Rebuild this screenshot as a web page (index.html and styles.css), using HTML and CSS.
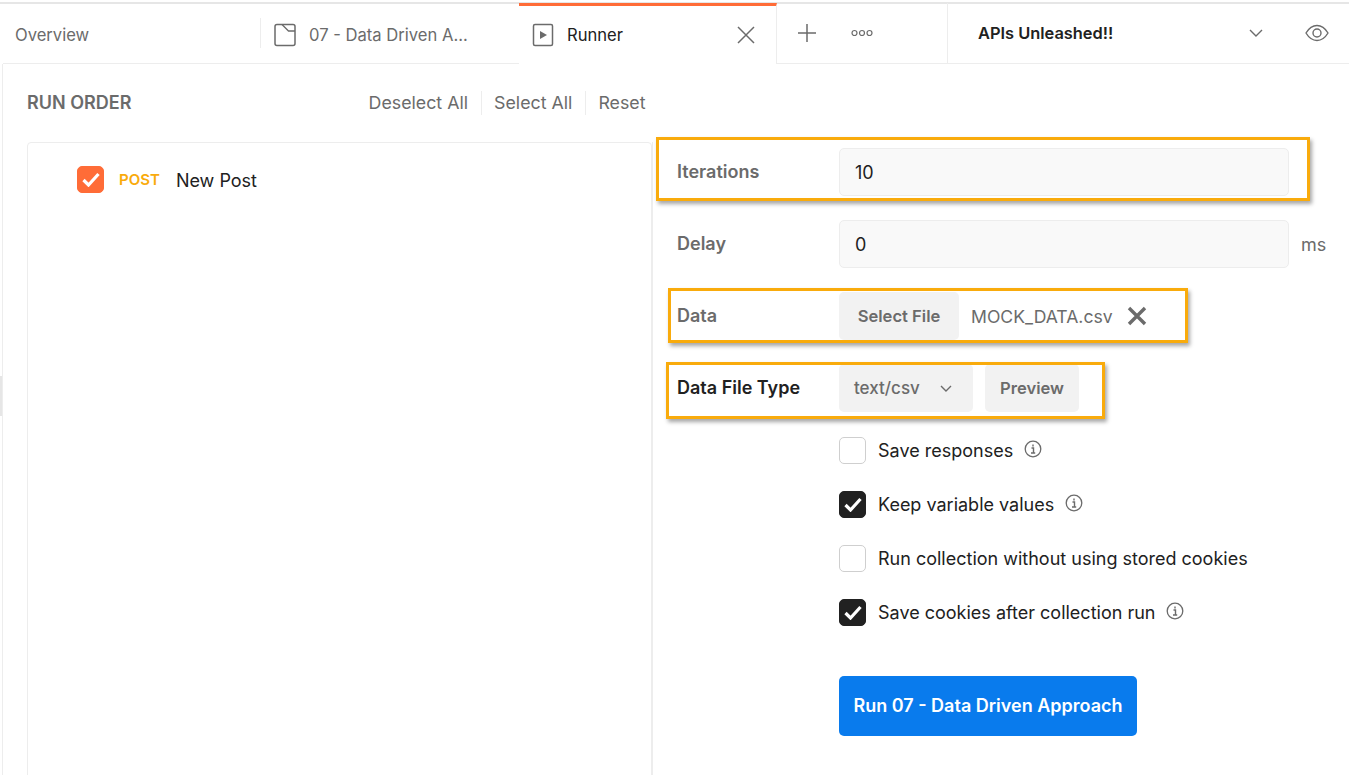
FILE: index.html
```html
<!DOCTYPE html>
<html lang="en">
<head>
<meta charset="utf-8">
<title>Runner</title>
<link rel="stylesheet" href="styles.css">
</head>
<body>
<div class="app">
  <header class="tabbar">
    <div class="tab tab-overview"><span class="tab-label">Overview</span></div>
    <div class="tab tab-collection">
      <svg class="tab-icon" viewBox="0 0 24 24" width="24" height="24"><rect x="2" y="1.500" width="20" height="21" rx="2" fill="none" stroke="#6b6b6b" stroke-width="1.500"/><path d="M9 1.500l6.500 6.500h6.500" stroke="#6b6b6b" stroke-width="1.300" fill="none"/></svg>
      <span class="tab-label">07 - Data Driven A...</span>
    </div>
    <div class="tab tab-runner">
      <svg class="tab-icon" viewBox="0 0 24 24" width="24" height="24"><rect x="2.500" y="1.500" width="19" height="21" rx="1.500" fill="none" stroke="#6b6b6b" stroke-width="1.500"/><path d="M9 8l7 4-7 4z" fill="#6b6b6b"/></svg>
      <span class="tab-label tab-label-active">Runner</span>
      <svg class="tab-close" viewBox="0 0 18 18" width="18" height="18"><path d="M1 1l16 16M17 1L1 17" stroke="#6b6b6b" stroke-width="1.500" fill="none"/></svg>
    </div>
    <div class="tab-actions">
      <svg viewBox="0 0 20 20" width="20" height="20"><path d="M10 1v18M1 10h18" stroke="#6b6b6b" stroke-width="1.500" fill="none"/></svg>
      <svg class="more" viewBox="0 0 22 8" width="22" height="8"><circle cx="3.500" cy="4" r="2.500" fill="none" stroke="#6b6b6b" stroke-width="1.200"/><circle cx="11" cy="4" r="2.500" fill="none" stroke="#6b6b6b" stroke-width="1.200"/><circle cx="18.500" cy="4" r="2.500" fill="none" stroke="#6b6b6b" stroke-width="1.200"/></svg>
    </div>
    <div class="env">
      <span class="env-name">APIs Unleashed!!</span>
      <svg class="env-chevron" viewBox="0 0 14 8" width="14" height="8"><path d="M1 1l6 6 6-6" stroke="#6b6b6b" stroke-width="1.400" fill="none"/></svg>
      <svg class="env-eye" viewBox="0 0 24 18" width="24" height="18"><path d="M1 9C4 4 7.500 1.500 12 1.500S20 4 23 9c-3 5-6.500 7.500-11 7.500S4 14 1 9z" fill="none" stroke="#6b6b6b" stroke-width="1.400"/><circle cx="12" cy="9" r="4" fill="none" stroke="#6b6b6b" stroke-width="1.400"/></svg>
    </div>
  </header>

  <main class="runner">
    <section class="order">
      <div class="order-head">
        <h2 class="order-title">RUN ORDER</h2>
        <div class="order-links">
          <span class="order-link">Deselect All</span>
          <span class="order-link">Select All</span>
          <span class="order-link">Reset</span>
        </div>
      </div>
      <div class="order-list">
        <div class="order-item">
          <span class="check check-orange"><svg viewBox="0 0 18 15" width="18" height="15"><path d="M1.500 8l5 5 10-11" stroke="#fff" stroke-width="3.200" fill="none"/></svg></span>
          <span class="method">POST</span>
          <span class="request">New Post</span>
        </div>
      </div>
    </section>

    <section class="config">
      <div class="row">
        <label class="label">Iterations</label>
        <div class="input">10</div>
      </div>
      <div class="row">
        <label class="label">Delay</label>
        <div class="input">0</div>
        <span class="unit">ms</span>
      </div>
      <div class="row">
        <label class="label">Data</label>
        <div class="btn btn-file">Select File</div>
        <span class="file-name">MOCK_DATA.csv</span>
        <svg class="file-clear" viewBox="0 0 20 20" width="20" height="20"><path d="M2 2l16 16M18 2L2 18" stroke="#6b6b6b" stroke-width="3.400" fill="none"/></svg>
      </div>
      <div class="row">
        <label class="label label-dark">Data File Type</label>
        <div class="btn btn-select">text/csv
          <svg viewBox="0 0 12 7" width="12" height="7"><path d="M1 1l5 5 5-5" stroke="#6b6b6b" stroke-width="1.400" fill="none"/></svg>
        </div>
        <div class="btn btn-preview">Preview</div>
      </div>
      <div class="options">
        <div class="option">
          <span class="check"></span><span class="option-text">Save responses</span>
          <svg class="info" viewBox="0 0 18 18" width="18" height="18"><circle cx="9" cy="9" r="7.800" fill="none" stroke="#6b6b6b" stroke-width="1.300"/><path d="M7.500 8h2v5M7 13h4.200M9 4.500v2" stroke="#6b6b6b" stroke-width="1.400" fill="none"/></svg>
        </div>
        <div class="option">
          <span class="check check-dark"><svg viewBox="0 0 18 15" width="18" height="15"><path d="M1.500 8l5 5 10-11" stroke="#fff" stroke-width="3.200" fill="none"/></svg></span><span class="option-text">Keep variable values</span>
          <svg class="info" viewBox="0 0 18 18" width="18" height="18"><circle cx="9" cy="9" r="7.800" fill="none" stroke="#6b6b6b" stroke-width="1.300"/><path d="M7.500 8h2v5M7 13h4.200M9 4.500v2" stroke="#6b6b6b" stroke-width="1.400" fill="none"/></svg>
        </div>
        <div class="option">
          <span class="check"></span><span class="option-text">Run collection without using stored cookies</span>
        </div>
        <div class="option">
          <span class="check check-dark"><svg viewBox="0 0 18 15" width="18" height="15"><path d="M1.500 8l5 5 10-11" stroke="#fff" stroke-width="3.200" fill="none"/></svg></span><span class="option-text">Save cookies after collection run</span>
          <svg class="info" viewBox="0 0 18 18" width="18" height="18"><circle cx="9" cy="9" r="7.800" fill="none" stroke="#6b6b6b" stroke-width="1.300"/><path d="M7.500 8h2v5M7 13h4.200M9 4.500v2" stroke="#6b6b6b" stroke-width="1.400" fill="none"/></svg>
        </div>
      </div>
      <div class="run">Run 07 - Data Driven Approach</div>
    </section>
  </main>
  <div class="handle"></div>
  <div class="mark mark-iterations"></div>
  <div class="mark mark-data"></div>
  <div class="mark mark-type"></div>
</div>
</body>
</html>
```
FILE: styles.css
```css
* { box-sizing: border-box; }
html, body { margin: 0; height: 100%; background: #fff; overflow: hidden; }
body { font-family: Inter, "Liberation Sans", sans-serif; font-size: 18px; color: #212121; }
.app { position: relative; width: 1349px; height: 775px; padding: 3px 0 0 2px; }
.app::before { content: ""; position: absolute; left: 0; right: 0; top: 2px; height: 2px; background: #e6e6e6; }

.tabbar { display: flex; height: 61px; border-bottom: 1px solid #ededed; position: relative; margin-left: 1px; font-size: 16.600px; }
.tab { width: 258px; display: flex; align-items: center; position: relative; height: 60px; padding-top: 3px; }
.tab-label { color: #6b6b6b; white-space: nowrap; }
.tab-overview { padding-left: 12px; }
.tab-overview::after { content: ""; position: absolute; right: 0; top: 15px; bottom: 15px; width: 1px; background: #ededed; }
.tab-collection { padding-left: 12px; gap: 12px; }
.tab-runner { background: #fff; height: 61px; padding-top: 0; padding-left: 12px; gap: 12px; border-top: 3px solid #ff6c37; border-right: 1px solid #ededed; }
.tab-label-active { color: #212121; }
.tab-close { position: absolute; left: 218px; }
.tab-actions { width: 171px; display: flex; align-items: center; padding-left: 20px; gap: 34px; border-right: 1px solid #ededed; height: 60px; }
.more { margin-top: -1px; }
.env { flex: 1; display: flex; align-items: center; padding-left: 30px; height: 60px; }
.env-name { font-weight: 600; font-size: 16.400px; color: #212121; }
.env-chevron { margin-left: 136px; }
.env-eye { margin-left: 42px; }

.runner { display: flex; padding-left: 24px; border-left: 1px solid #ededed; height: 711px; }
.order { width: 625px; flex: none; }
.order-head { display: flex; justify-content: space-between; align-items: center; height: 78px; padding-right: 6.500px; }
.order-title { margin: -2px 0 0; font-size: 18px; font-weight: 600; color: #6b6b6b; }
.order-links { display: flex; font-size: 17.800px; }
.order-link { color: #6b6b6b; padding: 0 12.500px; border-left: 1px solid #ededed; line-height: 24px; }
.order-link:first-child { border-left: 0; }
.order-link:last-child { padding-right: 0; }
.order-list { height: 640px; border: 1px solid #ededed; border-radius: 4px 4px 0 0; padding: 23px 0 0 49px; }
.order-item { display: flex; align-items: center; }
.check { width: 27px; height: 27px; border: 1px solid #cfcfcf; border-radius: 5px; display: flex; align-items: center; justify-content: center; flex: none; }
.check-orange { background: #ff6c37; border-color: #ff6c37; }
.check-dark { background: #212121; border-color: #212121; }
.method { color: #f9ab0c; font-size: 15px; font-weight: 600; margin-left: 15px; }
.request { margin-left: 16px; margin-top: 2px; }

.config { flex: 1; padding: 6px 0 0 24px; border-left: 1px solid #ededed; margin-top: 78px; }
.row { display: flex; align-items: center; height: 48px; margin-bottom: 24px; }
.label { width: 162px; font-weight: 600; color: #6b6b6b; flex: none; margin-top: -2px; }
.label-dark { color: #212121; }
.input { width: 450px; height: 48px; background: #f9f9f9; border: 1px solid #ededed; border-radius: 5px; padding-left: 15px; display: flex; align-items: center; }
.unit { margin-left: 12px; color: #6b6b6b; }
.btn { height: 48px; background: #f2f2f2; border-radius: 5px; color: #6b6b6b; font-weight: 600; font-size: 16.600px; display: flex; align-items: center; justify-content: center; }
.btn-file { width: 120px; }
.file-name { margin-left: 12px; color: #6b6b6b; font-size: 17.600px; }
.file-clear { margin-left: 14px; }
.btn-select { width: 134px; font-weight: 500; font-size: 17px; gap: 20px; justify-content: flex-start; padding-left: 15px; }
.btn-preview { width: 94px; margin-left: 12px; }
.options { padding-left: 162px; }
.option { display: flex; align-items: center; height: 28px; margin-bottom: 26px; }
.option-text { margin-left: 12px; }
.info { margin-left: 11px; margin-top: -3px; }
.run { margin: 50px 0 0 162px; width: 298px; height: 60px; padding-bottom: 2px; background: #097bed; color: #fff; font-weight: 600; border-radius: 5px; display: flex; align-items: center; justify-content: center; }

.handle { position: absolute; left: 0; top: 376px; width: 2px; height: 40px; background: #e6e6e6; }
.mark { position: absolute; border: 3px solid #f9ab0c; box-shadow: 2px 3px 4px rgba(0,0,0,.35); }
.mark-iterations { left: 656px; top: 137px; width: 654px; height: 64px; }
.mark-data { left: 668px; top: 288px; width: 520px; height: 55px; }
.mark-type { left: 666px; top: 362px; width: 439px; height: 57px; }
```
